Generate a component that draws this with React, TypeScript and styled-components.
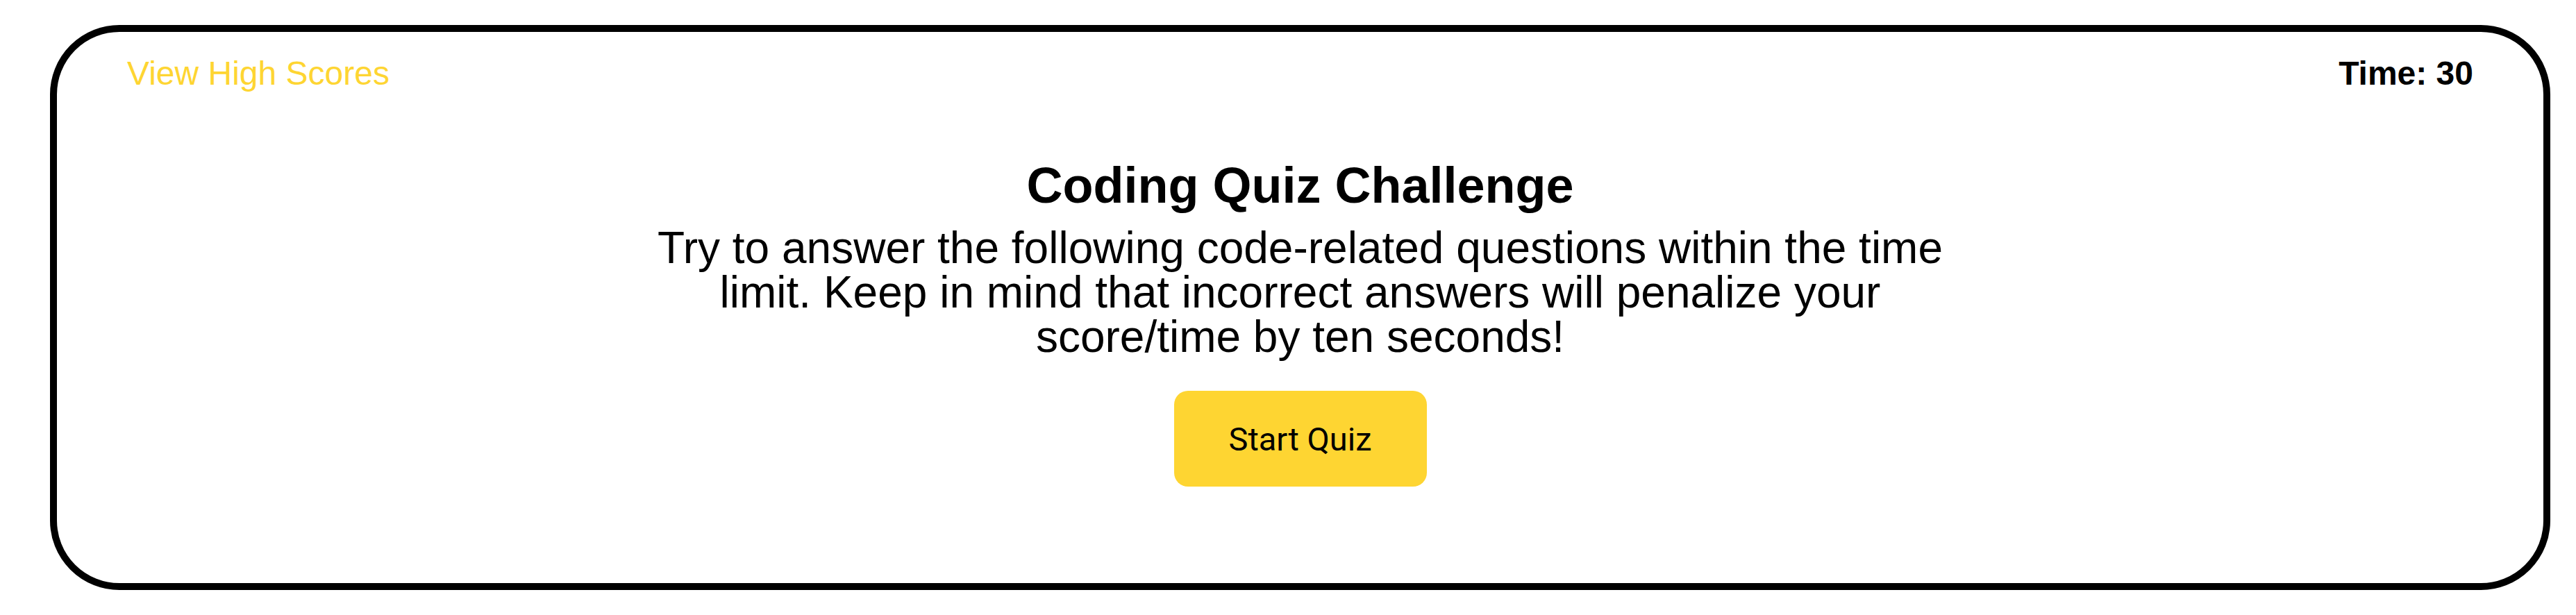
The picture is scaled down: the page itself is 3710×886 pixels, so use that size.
import React from "react";
import styled, { createGlobalStyle } from "styled-components";

const GlobalStyle = createGlobalStyle`
  html, body {
    margin: 0;
    padding: 0;
    background: #ffffff;
  }
  body {
    font-family: "Liberation Sans", Arial, Helvetica, sans-serif;
    color: #000000;
  }
`;

const Page = styled.div`
  padding: 36px 37px 36px 72px;
  box-sizing: border-box;
  width: 100%;
`;

const Card = styled.div`
  box-sizing: border-box;
  border: 10px solid #000000;
  border-radius: 100px;
  padding: 36px 101px 139px;
  display: flex;
  flex-direction: column;
`;

const Header = styled.header`
  display: flex;
  justify-content: space-between;
  align-items: flex-start;
  font-size: 48px;
  line-height: 48px;
`;

const ScoresLink = styled.a`
  color: #fed532;
  text-decoration: none;
  cursor: pointer;
`;

const Timer = styled.div`
  font-weight: 700;
`;

const Intro = styled.main`
  display: flex;
  flex-direction: column;
  align-items: center;
  text-align: center;
  padding-top: 101px;
`;

const Title = styled.h1`
  margin: 0;
  font-size: 72px;
  line-height: 72px;
  font-weight: 700;
`;

const Lead = styled.p`
  margin: 22px 0 0;
  max-width: 1900px;
  font-size: 64px;
  line-height: 64px;
`;

const StartButton = styled.button`
  margin-top: 46px;
  width: 364px;
  height: 138px;
  border: none;
  border-radius: 20px;
  background: #fed532;
  color: #000000;
  font-family: Roboto, "Noto Sans", sans-serif;
  font-size: 47px;
  cursor: pointer;
`;

export default function App() {
  return (
    <>
      <GlobalStyle />
      <Page>
        <Card>
          <Header>
            <ScoresLink>View High Scores</ScoresLink>
            <Timer>Time: 30</Timer>
          </Header>
          <Intro>
            <Title>Coding Quiz Challenge</Title>
            <Lead>
              Try to answer the following code-related questions within the time
              limit. Keep in mind that incorrect answers will penalize your
              score/time by ten seconds!
            </Lead>
            <StartButton>Start Quiz</StartButton>
          </Intro>
        </Card>
      </Page>
    </>
  );
}
